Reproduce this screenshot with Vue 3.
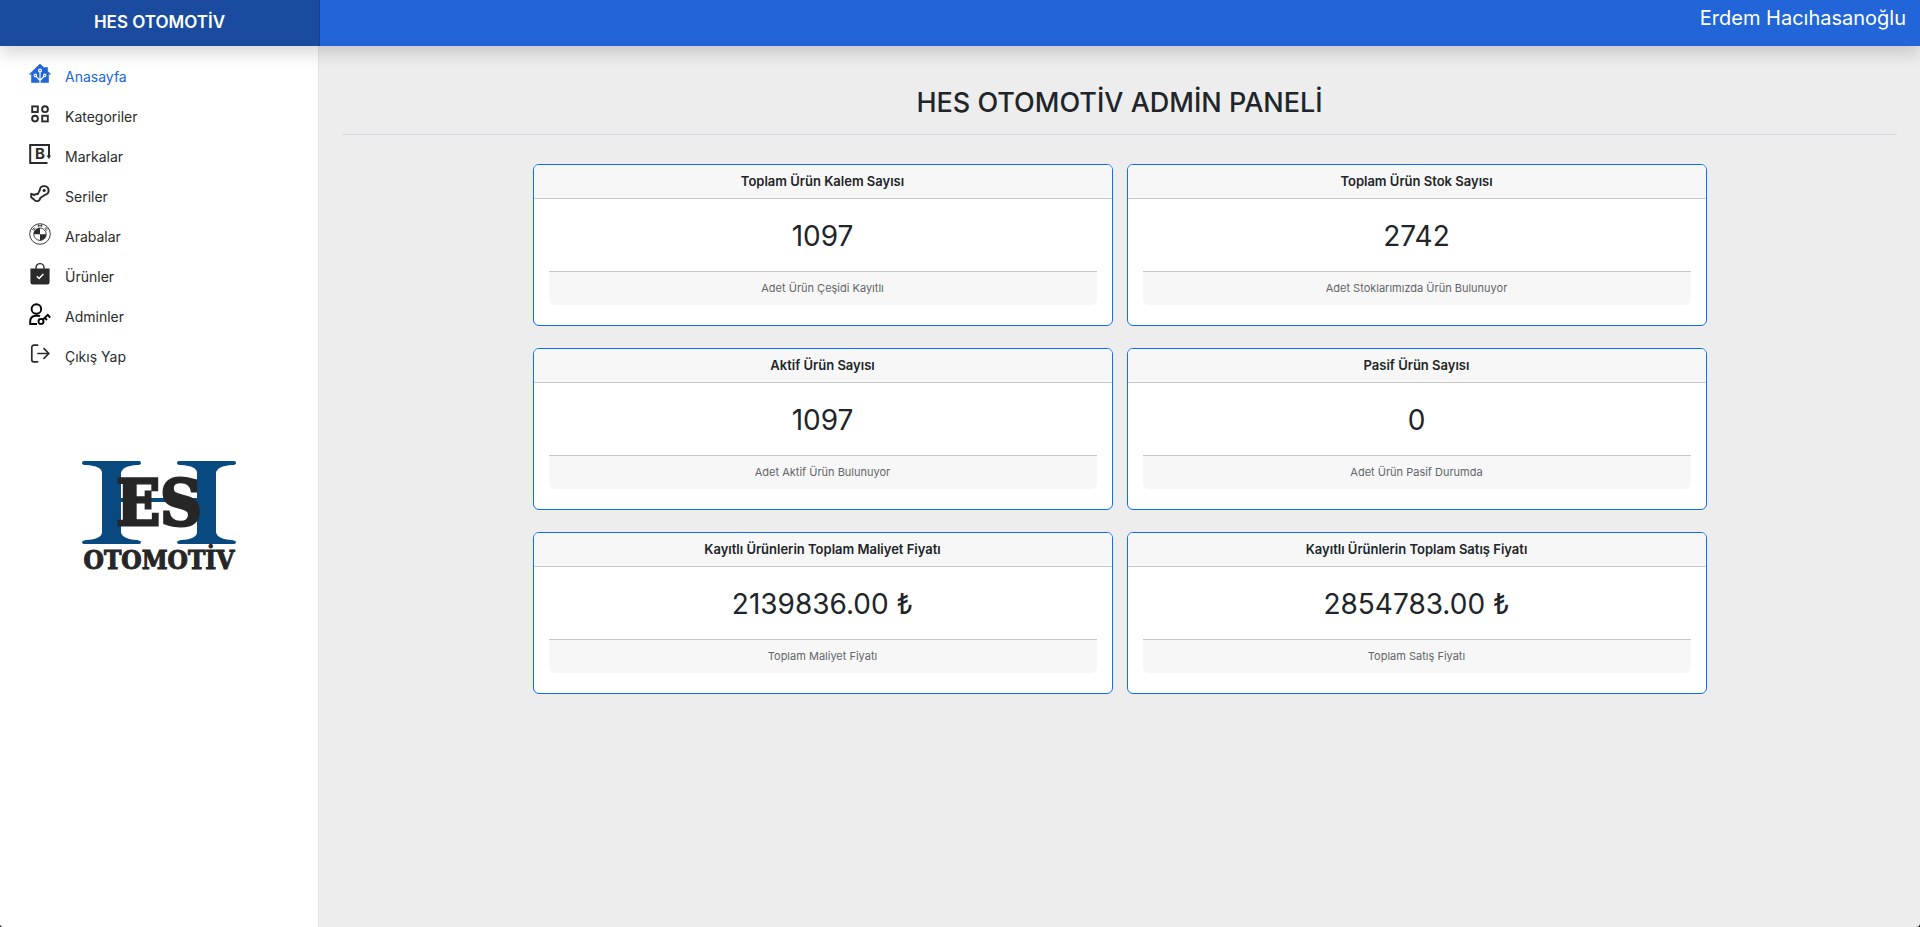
<script setup>
const menu = [
  { label: 'Anasayfa', icon: 'home' },
  { label: 'Kategoriler', icon: 'grid' },
  { label: 'Markalar', icon: 'brand' },
  { label: 'Seriler', icon: 'series' },
  { label: 'Arabalar', icon: 'car' },
  { label: 'Ürünler', icon: 'bag' },
  { label: 'Adminler', icon: 'admin' },
  { label: 'Çıkış Yap', icon: 'exit' }
]
const cards = [
  { title: 'Toplam Ürün Kalem Sayısı', value: '1097', note: 'Adet Ürün Çeşidi Kayıtlı' },
  { title: 'Toplam Ürün Stok Sayısı', value: '2742', note: 'Adet Stoklarımızda Ürün Bulunuyor' },
  { title: 'Aktif Ürün Sayısı', value: '1097', note: 'Adet Aktif Ürün Bulunuyor' },
  { title: 'Pasif Ürün Sayısı', value: '0', note: 'Adet Ürün Pasif Durumda' },
  { title: 'Kayıtlı Ürünlerin Toplam Maliyet Fiyatı', value: '2139836.00 ₺', note: 'Toplam Maliyet Fiyatı' },
  { title: 'Kayıtlı Ürünlerin Toplam Satış Fiyatı', value: '2854783.00 ₺', note: 'Toplam Satış Fiyatı' }
]
</script>

<template>
  <div class="shell">
    <header class="topbar">
      <a class="brand" href="#">HES OTOMOTİV</a>
      <span class="user">Erdem Hacıhasanoğlu</span>
    </header>
    <div class="body">
      <aside class="sidebar">
        <nav class="menu">
          <a v-for="(item, i) in menu" :key="item.icon" href="#" class="link" :class="{ active: i === 0 }">
            <svg class="icon" viewBox="0 0 22 22" aria-hidden="true">
              <g v-if="item.icon === 'home'">
                <path d="M11 1 L15.6 5.3 V4.5 H18.6 V8.2 L21.6 11.2 H19.5 V19.6 H2.5 V11.2 H.4 Z" fill="currentColor" stroke="currentColor" stroke-width=".6" stroke-linejoin="round" />
                <g fill="none" stroke="#fff" stroke-width="1.2">
                  <path d="M11 20 V8.5 M11 17.5 L6.8 13.2 M11 17.5 L15.2 13.2" />
                  <circle cx="11" cy="7.5" r="1.4" /><circle cx="6.3" cy="12.4" r="1.2" /><circle cx="15.7" cy="12.4" r="1.2" />
                </g>
              </g>
              <g v-else-if="item.icon === 'grid'" fill="none" stroke="currentColor" stroke-width="1.9">
                <rect x="3.2" y="3.4" width="5.6" height="5.6" /><circle cx="16" cy="6.2" r="2.9" />
                <circle cx="6" cy="15.6" r="2.9" /><rect x="13.2" y="12.8" width="5.6" height="5.6" />
              </g>
              <g v-else-if="item.icon === 'brand'">
                <path d="M18.5 20 H1.2 V2 H20 V14.5" fill="none" stroke="currentColor" stroke-width="2" />
                <path d="M17.5 12.5 H22 L20 16 Z" fill="currentColor" />
                <text x="6" y="16.3" class="brand-mark">B</text>
              </g>
              <g v-else-if="item.icon === 'series'" fill="none" stroke="currentColor" stroke-width="1.9" stroke-linejoin="round">
                <path d="M10.8 7.2 A4.4 4.4 0 1 1 16.2 11.8 L11.2 15 A3.3 3.3 0 0 1 5 16.4 L2.2 14.2 V10.8 L5.4 12 Q7.4 10.6 8.8 11.2 Z" />
                <circle cx="15.2" cy="7.5" r="1.2" fill="currentColor" stroke-width="1" />
              </g>
              <g v-else-if="item.icon === 'car'">
                <g fill="none" stroke="currentColor"><circle cx="11" cy="11" r="10.3" stroke-width=".9" /><circle cx="11" cy="11.2" r="6.2" stroke-width=".9" /></g>
                <path d="M11 11.2 V5 A6.2 6.2 0 0 0 4.8 11.2 Z M11 11.2 V17.4 A6.2 6.2 0 0 0 17.2 11.2 Z" fill="currentColor" />
                <path d="M3.4 6.8 L5.6 4.6 M4.4 7.4 L6.3 5.5 M9.3 3.8 V1.8 L11 3.2 L12.7 1.8 V3.8 M15.8 5.5 L17.8 7.3 M16.6 4.2 L18.8 6.4" fill="none" stroke="currentColor" stroke-width="1" />
              </g>
              <g v-else-if="item.icon === 'bag'">
                <path d="M1.4 5.5 H20.6 V19 A2.5 2.5 0 0 1 18.1 21.5 H3.9 A2.5 2.5 0 0 1 1.4 19 Z" fill="currentColor" />
                <path d="M7 6 V4.4 A4 3.8 0 0 1 15 4.4 V6" fill="none" stroke="currentColor" stroke-width="1.4" />
                <path d="M7.8 13.2 L10.1 15.5 L14.4 11" fill="none" stroke="#fff" stroke-width="1.5" />
              </g>
              <g v-else-if="item.icon === 'admin'" class="ink" fill="none" stroke-width="1.9">
                <circle cx="7.4" cy="6" r="4.8" />
                <path d="M11 13.2 Q9.5 12.5 7.3 12.5 Q1.2 13 1.2 18.5 V21 H8" />
                <circle cx="12" cy="18.4" r="2.5" /><path d="M13.8 16.7 L18.8 11.9 L21.2 14.6 M15.8 14.8 L18 17" />
              </g>
              <g v-else fill="none" stroke="currentColor" stroke-width="1.7" stroke-linecap="round" stroke-linejoin="round">
                <path d="M8.6 2.2 H4.8 A2 2 0 0 0 2.8 4.2 V16.8 A2 2 0 0 0 4.8 18.8 H8.6 M9 10.5 H19.8 M15 5.6 L19.9 10.5 L15 15.4" />
              </g>
            </svg>
            <span>{{ item.label }}</span>
          </a>
        </nav>
        <svg class="logo" viewBox="0 0 154 110" role="img" aria-label="HES OTOMOTİV">
          <g class="pillars">
            <path d="M2 0 H57 Q59 0 59 2 Q59 4 55 4 Q40 5 39 12 V71 Q40 78 55 79 Q59 80 59 81 Q59 83 57 83 H2 Q0 83 0 81 Q0 80 4 79 Q20 78 20 71 V12 Q20 5 4 4 Q0 4 0 2 Q0 0 2 0 Z" />
            <path d="M97 0 H152 Q154 0 154 2 Q154 4 150 4 Q135 5 134 12 V71 Q135 78 150 79 Q154 80 154 81 Q154 83 152 83 H97 Q95 83 95 81 Q95 80 99 79 Q115 78 115 71 V12 Q115 5 99 4 Q95 4 95 2 Q95 0 97 0 Z" />
            <rect x="38" y="37" width="78" height="4" />
          </g>
          <text x="77" y="64" class="mono">ES</text>
          <text x="77" y="108" class="word">OTOMOTİV</text>
        </svg>
      </aside>
      <main class="content">
        <h1>HES OTOMOTİV ADMİN PANELİ</h1>
        <hr />
        <div class="cards">
          <section v-for="card in cards" :key="card.title" class="card">
            <h2>{{ card.title }}</h2>
            <div class="card-body">
              <p class="value">{{ card.value }}</p>
              <p class="note">{{ card.note }}</p>
            </div>
          </section>
        </div>
      </main>
    </div>
  </div>
</template>

<style>
body { margin: 0; background: #14222e; }
</style>

<style scoped>
* { box-sizing: border-box; }
.shell { min-height: 100vh; display: flex; flex-direction: column; font-family: Inter, "Liberation Sans", sans-serif; color: #212529; }
.topbar { display: flex; height: 46px; background: #2165d8; position: relative; z-index: 1; box-shadow: 0 8px 16px rgba(0, 0, 0, .15); color: #fff; }
.brand { width: 320px; flex: none; display: flex; align-items: center; justify-content: center; padding-bottom: 3px; background: #1a4b9f; border-right: 1px solid #184085; color: #fff; text-decoration: none; font-size: 17px; font-weight: 600; }
.user { margin-left: auto; padding-right: 14px; font-size: 20px; line-height: 36px; }
.body { flex: 1; display: flex; background: #ededed; border-radius: 0 0 4px 4px; overflow: hidden; }
.sidebar { width: 319px; flex: none; background: #fff; border-right: 1px solid #e4e4e4; }
.menu { padding-top: 8px; display: flex; flex-direction: column; }
.link { height: 40px; padding: 0 29px; display: flex; align-items: center; gap: 14px; font-size: 14px; line-height: 20px; color: #2b2b2b; text-decoration: none; }
.link span { padding-top: 5px; }
.link.active { color: #2165d8; }
.icon { width: 22px; height: 22px; flex: none; overflow: visible; }
.ink { stroke: #000; }
.brand-mark { font: 700 15px Inter, sans-serif; fill: currentColor; }
.logo { display: block; width: 154px; height: 110px; margin: 87px auto 0; overflow: visible; }
.pillars { fill: #084a80; }
.mono, .word { font-family: "DejaVu Serif Condensed", "DejaVu Serif", serif; font-weight: 700; text-anchor: middle; fill: #262626; stroke: #262626; }
.mono { font-size: 64px; stroke-width: 3px; }
.word { font-size: 26px; stroke-width: 1px; }
.content { flex: 1; padding: 40px 23px; }
h1 { margin: 0; text-align: center; font-size: 27px; line-height: 34px; font-weight: 500; }
hr { margin: 14px 0 29px; border: 0; border-top: 1px solid #d3dae0; }
.cards { max-width: 1174px; margin: 0 auto; display: grid; grid-template-columns: 1fr 1fr; gap: 22px 14px; }
.card { background: #fff; border: 1px solid #0d6efd; border-radius: 6px; overflow: hidden; text-align: center; }
h2 { margin: 0; padding: 6px 16px 7px; background: #f7f7f7; border-bottom: 1px solid #c8c8c8; font-size: 13px; line-height: 20px; font-weight: 600; }
.card-body { padding: 16px 15px 20px; }
p { margin: 0; }
.value { font-size: 28px; line-height: 42px; margin-bottom: 14px; }
.note { padding: 8px 16px; background: #f7f7f7; border-top: 1px solid #c8c8c8; border-radius: 0 0 5px 5px; color: #636669; font-size: 11px; line-height: 17px; }
</style>
